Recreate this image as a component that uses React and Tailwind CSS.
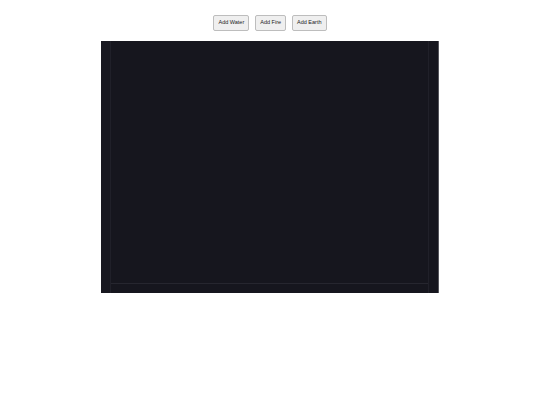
const App = () => {
  const buttons = ['Add Water', 'Add Fire', 'Add Earth'];
  return (
    <div className="w-[540px] h-[405px] bg-white flex flex-col items-center pt-[15px] font-['Liberation_Sans',Arial,sans-serif]">
      <div className="flex gap-[6px]">
        {buttons.map((b) => (
          <button
            key={b}
            className="h-[16px] px-[4px] text-[5.5px] text-[#222] bg-[#efefef] border border-[#bdbdbd] rounded-[2px] leading-none"
          >
            {b}
          </button>
        ))}
      </div>
      <div className="mt-[10px] w-[338px] h-[252px] bg-[#16161e] border-r border-[#55555c] flex">
        <div className="w-[10px] bg-[#181820] border-r border-[#202029]" />
        <div className="flex-1 flex flex-col">
          <div className="flex-1" />
          <div className="h-[10px] border-t border-[#26262f]" />
        </div>
        <div className="w-[10px] border-l border-[#202029]" />
      </div>
    </div>
  );
};

export default App;
